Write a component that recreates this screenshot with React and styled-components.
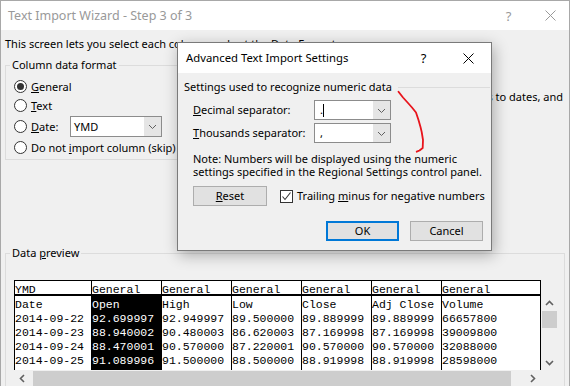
import React from "react";
import styled, { createGlobalStyle } from "styled-components";

const GlobalStyle = createGlobalStyle`
  html, body {
    margin: 0;
    padding: 0;
    overflow: hidden;
    background: #f0f0f0;
  }
  * { box-sizing: border-box; }
`;

const UI_FONT = `"Noto Sans", "Liberation Sans", sans-serif`;
const MONO_FONT = `"Liberation Mono", "Courier New", monospace`;

const Window = styled.div`
  position: relative;
  width: 570px;
  height: 386px;
  background: #f0f0f0;
  border: 1px solid #a8a8a8;
  border-bottom: none;
  overflow: hidden;
  font-family: ${UI_FONT};
  font-size: 11px;
  line-height: 16px;
  color: #000;
`;

const TitleBar = styled.div`
  display: flex;
  align-items: center;
  height: ${(p) => (p.$dialog ? 30 : 29)}px;
  background: #fff;
  padding-left: ${(p) => (p.$dialog ? 8 : 7)}px;
  color: ${(p) => (p.$dialog ? "#000" : "#999")};
  font-size: ${(p) => (p.$dialog ? 11.3 : 12.5)}px;
`;

const TitleText = styled.span`
  flex: 1;
  white-space: nowrap;
`;

const CaptionButton = styled.span`
  width: ${(p) => p.$w || 45}px;
  height: 100%;
  display: flex;
  align-items: center;
  justify-content: center;
  font-size: 13px;
`;

const Body = styled.div`
  padding: 6px 4px 0 4px;
`;

const Intro = styled.div`
  white-space: nowrap;
`;

const TopRow = styled.div`
  display: flex;
  margin-top: 5px;
`;

const Group = styled.fieldset`
  margin: 0;
  border: 1px solid #dcdcdc;
  padding: ${(p) => p.$pad};
  width: ${(p) => p.$w}px;
  min-width: 0;
  flex: none;
`;

const Legend = styled.legend`
  padding: 0 2px;
  margin-left: -4px;
  line-height: 16px;
`;

const RadioList = styled.div`
  display: flex;
  flex-direction: column;
`;

const RadioRow = styled.label`
  display: flex;
  align-items: center;
  height: ${(p) => p.$h || 19}px;
  white-space: nowrap;
`;

const RadioCircle = styled.span`
  width: 13px;
  height: 13px;
  border-radius: 50%;
  border: 1px solid #333;
  background: #fff;
  margin-right: 4px;
  display: flex;
  align-items: center;
  justify-content: center;
  flex: none;
  &::after {
    content: "";
    width: 7px;
    height: 7px;
    border-radius: 50%;
    background: ${(p) => (p.$checked ? "#333" : "transparent")};
  }
`;

const DateLabel = styled.span`
  width: 39px;
`;

const Combo = styled.div`
  display: flex;
  width: ${(p) => p.$w}px;
  height: ${(p) => p.$h || 20}px;
  border: 1px solid #8c8c8c;
  background: #fff;
`;

const ComboText = styled.div`
  flex: 1;
  padding-left: ${(p) => p.$pl || 3}px;
  display: flex;
  align-items: center;
  white-space: pre;
`;

const Caret = styled.span`
  display: inline-block;
  width: 1px;
  height: 13px;
  background: #000;
`;

const ComboButton = styled.div`
  width: 17px;
  background: #e5e5e5;
  display: flex;
  align-items: center;
  justify-content: center;
`;

const Description = styled.div`
  flex: 1;
  min-width: 0;
  margin-top: 32px;
  padding-right: 2px;
  display: flex;
  justify-content: flex-end;
  white-space: nowrap;
  overflow: hidden;
  height: 16px;
`;

const PreviewWrap = styled.div`
  margin-top: 85px;
`;

const ListArea = styled.div`
  display: grid;
  grid-template-columns: 527px 17px;
  grid-template-rows: 90px 17px;
`;

const Table = styled.div`
  display: flex;
  border-top: 1px solid #000;
  background: #fff;
  font-family: ${MONO_FONT};
  font-size: 11.5px;
  white-space: pre;
`;

const Column = styled.div`
  width: ${(p) => p.$w}px;
  border-left: 1px solid #000;
  border-right: ${(p) => (p.$last ? "1px solid #000" : "none")};
  display: flex;
  flex-direction: column;
`;

const HeaderCell = styled.div`
  height: 15px;
  line-height: 17px;
  border-bottom: 2px solid #000;
  overflow: hidden;
  background: #fff;
`;

const ColumnBody = styled.div`
  flex: 1;
  padding-top: 2px;
  background: ${(p) => (p.$selected ? "#000" : "#fff")};
  color: ${(p) => (p.$selected ? "#fff" : "#000")};
`;

const Cell = styled.div`
  height: 14px;
  line-height: 14px;
  overflow: hidden;
`;

const VScroll = styled.div`
  display: flex;
  flex-direction: column;
  padding-top: 16px;
`;

const ScrollBtn = styled.div`
  height: ${(p) => p.$h || 15}px;
  width: ${(p) => p.$w || 17}px;
  display: flex;
  align-items: center;
  justify-content: center;
  flex: none;
`;

const VThumb = styled.div`
  height: 17px;
  margin: 0 1px;
  background: #cdcdcd;
`;

const VTrack = styled.div`
  flex: 1;
`;

const HScroll = styled.div`
  display: flex;
`;

const HThumb = styled.div`
  width: 478px;
  margin: 1px 0 0 2px;
  background: #cdcdcd;
`;

const HTrack = styled.div`
  flex: 1;
`;

const Dialog = styled.div`
  position: absolute;
  left: 176px;
  top: 41px;
  width: 315px;
  height: 209px;
  border: 1px solid #7a7a7a;
  background: #f0f0f0;
  box-shadow: 2px 4px 14px rgba(0, 0, 0, 0.3);
  display: flex;
  flex-direction: column;
`;

const DialogBody = styled.div`
  padding: 6px 1px 0 6px;
  display: flex;
  flex-direction: column;
`;

const SectionHead = styled.div`
  display: flex;
  align-items: center;
  white-space: nowrap;
  &::after {
    content: "";
    flex: 1;
    height: 1px;
    background: #dcdcdc;
    margin-left: 6px;
  }
`;

const FieldRow = styled.div`
  display: flex;
  align-items: center;
  padding-left: 9px;
  margin-top: ${(p) => p.$mt}px;
`;

const FieldLabel = styled.span`
  width: 121px;
  white-space: nowrap;
`;

const Note = styled.div`
  padding-left: 9px;
  margin-top: 9px;
  line-height: 13px;
  white-space: nowrap;
`;

const ActionRow = styled.div`
  display: flex;
  align-items: center;
  padding-left: 9px;
  margin-top: ${(p) => p.$mt}px;
  justify-content: ${(p) => (p.$end ? "flex-end" : "flex-start")};
  padding-right: ${(p) => (p.$end ? 7 : 0)}px;
  gap: ${(p) => p.$gap || 0}px;
`;

const Button = styled.div`
  width: ${(p) => p.$w || 73}px;
  height: 20px;
  background: #e1e1e1;
  border: ${(p) => (p.$default ? "2px solid #0078d7" : "1px solid #adadad")};
  display: flex;
  align-items: center;
  justify-content: center;
`;

const CheckRow = styled.label`
  display: flex;
  align-items: center;
  margin-left: 13px;
  white-space: nowrap;
`;

const CheckBox = styled.span`
  width: 13px;
  height: 13px;
  border: 1px solid #333;
  background: #fff;
  margin-right: 4px;
  display: flex;
  align-items: center;
  justify-content: center;
`;

const Annotation = styled.svg`
  position: absolute;
  left: 393px;
  top: 86px;
  overflow: visible;
  pointer-events: none;
`;

const Close = ({ color }) => (
  <svg width="11" height="11" viewBox="0 0 11 11">
    <path d="M0.5 0.5 L10.5 10.5 M10.5 0.5 L0.5 10.5" stroke={color} strokeWidth="1" fill="none" />
  </svg>
);

const Chevron = ({ dir = "down", size = 9, color = "#606060", sw = 1 }) => {
  const d = {
    down: "M1 3 L4.5 6.5 L8 3",
    up: "M1 6 L4.5 2.5 L8 6",
    left: "M6 1 L2.5 4.5 L6 8",
    right: "M3 1 L6.5 4.5 L3 8",
  }[dir];
  return (
    <svg width={size} height={size} viewBox="0 0 9 9">
      <path d={d} stroke={color} strokeWidth={sw} fill="none" />
    </svg>
  );
};

const columns = [
  { w: 77, head: "YMD", cells: ["Date", "2014-09-22", "2014-09-23", "2014-09-24", "2014-09-25"] },
  { w: 70, head: "General", selected: true, cells: ["Open", "92.699997", "88.940002", "88.470001", "91.089996"] },
  { w: 70, head: "General", cells: ["High", "92.949997", "90.480003", "90.570000", "91.500000"] },
  { w: 70, head: "General", cells: ["Low", "89.500000", "86.620003", "87.220001", "88.500000"] },
  { w: 70, head: "General", cells: ["Close", "89.889999", "87.169998", "90.570000", "88.919998"] },
  { w: 70, head: "General", cells: ["Adj Close", "89.889999", "87.169998", "90.570000", "88.919998"] },
  { w: 100, head: "General", last: true, cells: ["Volume", "66657800", "39009800", "32088000", "28598000"] },
];

export default function App() {
  return (
    <>
      <GlobalStyle />
      <Window>
        <TitleBar>
          <TitleText>Text Import Wizard - Step 3 of 3</TitleText>
          <CaptionButton>?</CaptionButton>
          <CaptionButton $w={38}>
            <Close color="#999" />
          </CaptionButton>
        </TitleBar>

        <Body>
          <Intro>This screen lets you select each column and set the Data Format.</Intro>

          <TopRow>
            <Group $w={232} $pad="4px 8px 2px 8px">
              <Legend>Column data format</Legend>
              <RadioList>
                <RadioRow>
                  <RadioCircle $checked />
                  <span><u>G</u>eneral</span>
                </RadioRow>
                <RadioRow>
                  <RadioCircle />
                  <span><u>T</u>ext</span>
                </RadioRow>
                <RadioRow $h={23}>
                  <RadioCircle />
                  <DateLabel><u>D</u>ate:</DateLabel>
                  <Combo $w={92} $h={21}>
                    <ComboText>YMD</ComboText>
                    <ComboButton>
                      <Chevron />
                    </ComboButton>
                  </Combo>
                </RadioRow>
                <RadioRow>
                  <RadioCircle />
                  <span>Do not <u>i</u>mport column (skip)</span>
                </RadioRow>
              </RadioList>
            </Group>
            <Description>
              <span>'General' converts numeric values to numbers, date values to dates, and</span>
            </Description>
          </TopRow>

          <PreviewWrap>
            <Group $w={560} $pad="19px 0 0 8px">
              <Legend>Data <u>p</u>review</Legend>
              <ListArea>
                <Table>
                  {columns.map((col, i) => (
                    <Column key={i} $w={col.w} $last={col.last}>
                      <HeaderCell>{col.head}</HeaderCell>
                      <ColumnBody $selected={col.selected}>
                        {col.cells.map((c, j) => (
                          <Cell key={j}>{c}</Cell>
                        ))}
                      </ColumnBody>
                    </Column>
                  ))}
                </Table>
                <VScroll>
                  <ScrollBtn>
                    <Chevron dir="up" sw={1.6} />
                  </ScrollBtn>
                  <VThumb />
                  <VTrack />
                  <ScrollBtn>
                    <Chevron dir="down" sw={1.6} />
                  </ScrollBtn>
                </VScroll>
                <HScroll>
                  <ScrollBtn $h={17}>
                    <Chevron dir="left" sw={1.6} />
                  </ScrollBtn>
                  <HThumb />
                  <HTrack />
                  <ScrollBtn $h={17}>
                    <Chevron dir="right" sw={1.6} />
                  </ScrollBtn>
                </HScroll>
              </ListArea>
            </Group>
          </PreviewWrap>
        </Body>

        <Dialog>
          <TitleBar $dialog>
            <TitleText>Advanced Text Import Settings</TitleText>
            <CaptionButton>?</CaptionButton>
            <CaptionButton>
              <Close color="#000" />
            </CaptionButton>
          </TitleBar>
          <DialogBody>
            <SectionHead>Settings used to recognize numeric data</SectionHead>
            <FieldRow $mt={5}>
              <FieldLabel><u>D</u>ecimal separator:</FieldLabel>
              <Combo $w={77}>
                <ComboText $pl={5}>
                  .<Caret />
                </ComboText>
                <ComboButton>
                  <Chevron />
                </ComboButton>
              </Combo>
            </FieldRow>
            <FieldRow $mt={3}>
              <FieldLabel><u>T</u>housands separator:</FieldLabel>
              <Combo $w={77}>
                <ComboText $pl={5}>,</ComboText>
                <ComboButton>
                  <Chevron />
                </ComboButton>
              </Combo>
            </FieldRow>
            <Note>
              Note: Numbers will be displayed using the numeric
              <br />
              settings specified in the Regional Settings control panel.
            </Note>
            <ActionRow $mt={8}>
              <Button $w={74}><u>R</u>eset</Button>
              <CheckRow>
                <CheckBox>
                  <svg width="11" height="11" viewBox="0 0 11 11">
                    <path d="M1.5 5.5 L4 8.5 L9.5 1.5" stroke="#333" strokeWidth="1.1" fill="none" />
                  </svg>
                </CheckBox>
                <span>Trailing <u>m</u>inus for negative numbers</span>
              </CheckRow>
            </ActionRow>
            <ActionRow $mt={15} $end $gap={11}>
              <Button $default>OK</Button>
              <Button>Cancel</Button>
            </ActionRow>
          </DialogBody>
        </Dialog>

        <Annotation width="34" height="70" viewBox="0 0 34 70">
          <polyline
            points="4.5,4.7 9,10.5 14,16 18,20.5 22,25.5 24.5,33 26.5,40 27.7,45 29,53 28.7,61 25.5,63.5 22.7,64.7"
            fill="none"
            stroke="#e8141c"
            strokeWidth="1.8"
            strokeLinejoin="round"
            strokeLinecap="round"
          />
        </Annotation>
      </Window>
    </>
  );
}
